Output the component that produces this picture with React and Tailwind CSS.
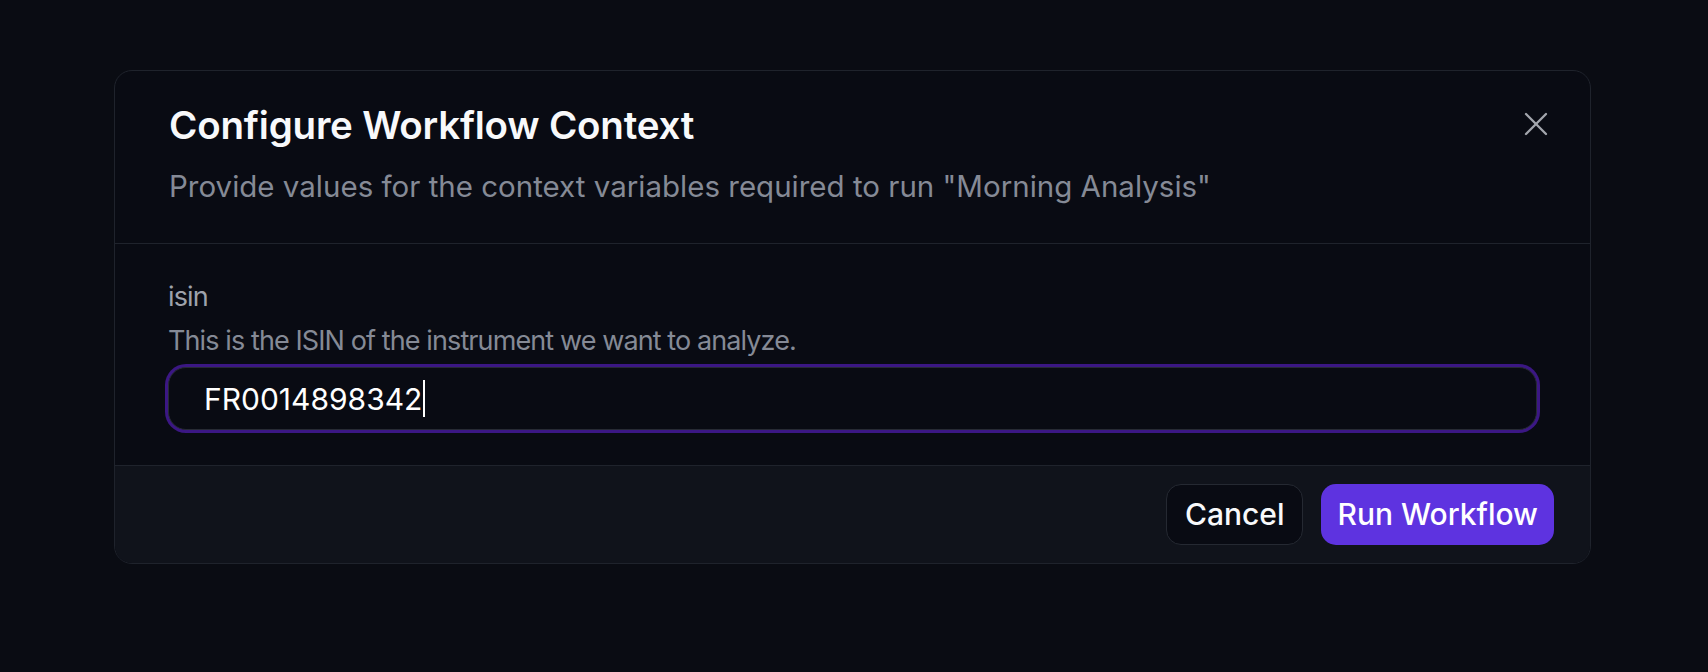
import React from "react";

function CloseIcon() {
  return (
    <svg width="40" height="40" viewBox="0 0 24 24" fill="none" stroke="currentColor" strokeWidth="1.4" strokeLinecap="round">
      <path d="M18 6 6 18" />
      <path d="m6 6 12 12" />
    </svg>
  );
}

export default function App() {
  return (
    <div
      className="w-[1708px] h-[672px] overflow-hidden bg-[#0a0c13] pt-[70px]"
      style={{ fontFamily: "Inter, 'Noto Sans', sans-serif" }}
    >
      <div className="ml-[114px] w-[1477px] rounded-[18px] border border-[#1f232c] bg-[#090b13] overflow-hidden">
        {/* Header */}
        <div className="relative px-[54px] pt-[31px] pb-[37px] border-b border-[#1f232c]">
          <h2 className="text-[38.5px] leading-[46px] font-semibold text-[#f8f9fb] tracking-[-0.2px]">
            Configure Workflow Context
          </h2>
          <p className="mt-[18px] text-[29.5px] leading-[40px] text-[#858a96]">
            Provide values for the context variables required to run "Morning Analysis"
          </p>
          <button className="absolute right-[34px] top-[33px] text-[#a3a6ad]">
            <CloseIcon />
          </button>
        </div>

        {/* Body */}
        <div className="px-[53px] pt-[33px] pb-[35px]">
          <div className="text-[27px] leading-[40px] tracking-[-0.9px] text-[#9ea2ab]">isin</div>
          <div className="mt-[4px] text-[27px] leading-[40px] tracking-[-0.9px] text-[#858a96]">
            This is the ISIN of the instrument we want to analyze.
          </div>
          <div className="mt-[6px] h-[63px] rounded-[18px] border border-[#272b34] ring-[3px] ring-[#3b1784] bg-[#090b13] flex items-center pl-[35px]">
            <span className="text-[30px] text-white leading-none">FR0014898342</span>
            <span className="inline-block w-[2px] h-[37px] bg-white ml-[1px]"></span>
          </div>
        </div>

        {/* Footer */}
        <div className="flex justify-end gap-[18px] px-[36px] pt-[18px] pb-[18px] border-t border-[#1f232c] bg-[#10131b]">
          <button className="h-[61px] px-[18px] rounded-[15px] border border-[#252932] bg-[#090b13] text-[30px] font-medium text-[#f8f9fb]">
            Cancel
          </button>
          <button className="h-[61px] px-[16px] rounded-[15px] bg-[#5e33e0] text-[30px] font-medium text-white">
            Run Workflow
          </button>
        </div>
      </div>
    </div>
  );
}
